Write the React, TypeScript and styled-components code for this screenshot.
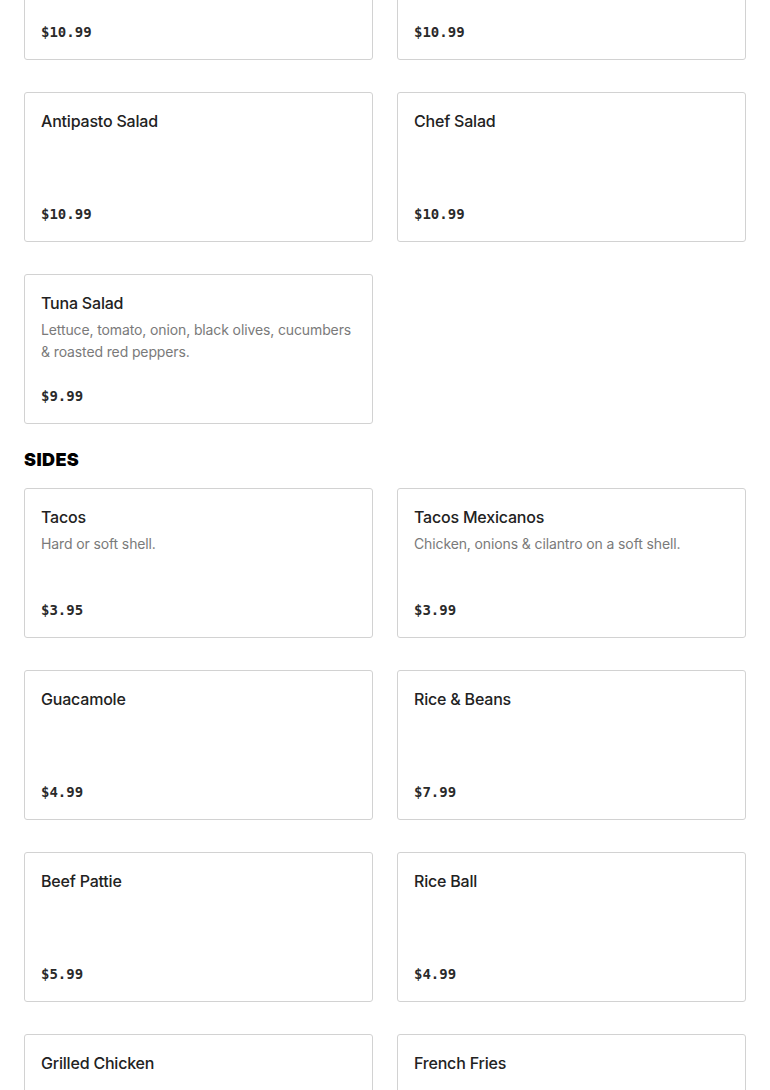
import React from "react";
import styled, { createGlobalStyle } from "styled-components";

const Global = createGlobalStyle`
  html, body { margin: 0; padding: 0; background: #ffffff; }
  body { font-family: Inter, "Liberation Sans", sans-serif; overflow: hidden; }
`;

const Page = styled.main`
  padding: 0 24px;
  margin-top: -90px;
`;

const Grid = styled.div`
  display: grid;
  grid-template-columns: 1fr 1fr;
  column-gap: 24px;
  row-gap: 32px;
`;

const SectionTitle = styled.h2`
  margin: 24px 0 16px;
  font-family: Inter, "Liberation Sans", sans-serif;
  font-weight: 900;
  font-size: 18px;
  line-height: 24px;
  color: #000;
  letter-spacing: 0.4px;
`;

const Card = styled.div`
  box-sizing: border-box;
  min-height: 150px;
  border: 1px solid #d2d2d2;
  border-radius: 3px;
  padding: 16px 16px 17px;
  display: flex;
  flex-direction: column;
`;

const Name = styled.h3`
  margin: 0 0 4px;
  font-family: Inter, "Liberation Sans", sans-serif;
  font-weight: 500;
  font-size: 16px;
  line-height: 24px;
  letter-spacing: -0.2px;
  color: #222222;
`;

const Desc = styled.p`
  margin: 0;
  font-family: Inter, "Liberation Sans", sans-serif;
  font-size: 14px;
  line-height: 22px;
  letter-spacing: -0.12px;
  color: #7a7a7a;
`;

const Price = styled.div`
  margin-top: auto;
  padding-top: 12px;
  font-family: "DejaVu Sans Mono", "Liberation Mono", monospace;
  font-weight: 700;
  font-size: 14px;
  line-height: 20px;
  color: #2a2a2a;
`;

type Item = { name: string; desc?: string; price: string };

const salads: Item[] = [
  { name: "Garden Salad", price: "$10.99" },
  { name: "Caesar Salad", price: "$10.99" },
  { name: "Antipasto Salad", price: "$10.99" },
  { name: "Chef Salad", price: "$10.99" },
  {
    name: "Tuna Salad",
    desc: "Lettuce, tomato, onion, black olives, cucumbers & roasted red peppers.",
    price: "$9.99",
  },
];

const sides: Item[] = [
  { name: "Tacos", desc: "Hard or soft shell.", price: "$3.95" },
  { name: "Tacos Mexicanos", desc: "Chicken, onions & cilantro on a soft shell.", price: "$3.99" },
  { name: "Guacamole", price: "$4.99" },
  { name: "Rice & Beans", price: "$7.99" },
  { name: "Beef Pattie", price: "$5.99" },
  { name: "Rice Ball", price: "$4.99" },
  { name: "Grilled Chicken", price: "$5.99" },
  { name: "French Fries", price: "$3.99" },
];

const MenuCard = ({ item }: { item: Item }) => (
  <Card>
    <Name>{item.name}</Name>
    {item.desc && <Desc>{item.desc}</Desc>}
    <Price>{item.price}</Price>
  </Card>
);

export default function App() {
  return (
    <>
      <Global />
      <Page>
        <Grid>
          {salads.map((s) => (
            <MenuCard key={s.name} item={s} />
          ))}
        </Grid>
        <SectionTitle>SIDES</SectionTitle>
        <Grid>
          {sides.map((s) => (
            <MenuCard key={s.name} item={s} />
          ))}
        </Grid>
      </Page>
    </>
  );
}
